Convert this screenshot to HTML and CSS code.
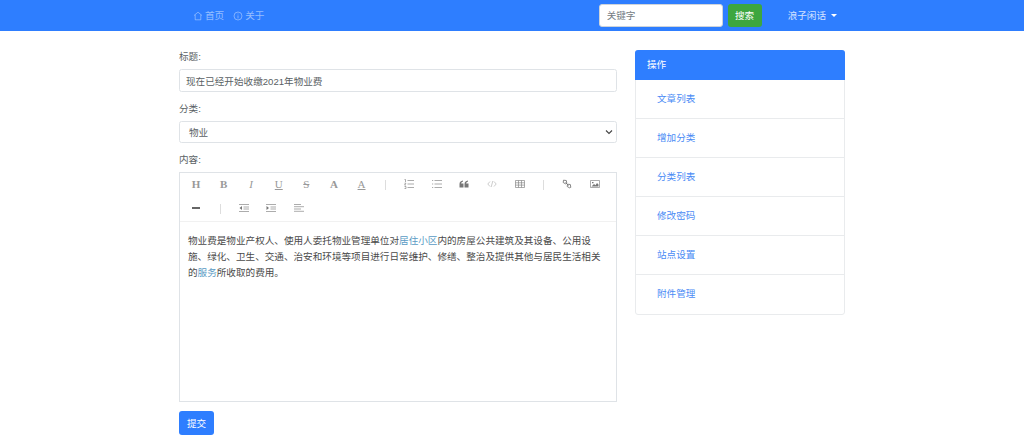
FILE: index.html
```html
<!DOCTYPE html>
<html lang="zh">
<head>
<meta charset="utf-8">
<title>编辑</title>
<link rel="stylesheet" href="styles.css">
</head>
<body>
<header class="navbar">
  <nav class="nav-left">
    <a class="nav-link" href="#"><svg class="nav-icon" viewBox="0 0 10 10"><path d="M1 4.500 5 1.200l4 3.300M2.200 3.800v5h5.600v-5"/></svg>首页</a>
    <a class="nav-link" href="#"><svg class="nav-icon" viewBox="0 0 10 10"><circle cx="5" cy="5" r="4"/><path d="M5 4.400v3M5 2.600v.8"/></svg>关于</a>
  </nav>
  <form class="search">
    <input class="search-input" placeholder="关键字">
    <button class="search-btn" type="button">搜索</button>
  </form>
  <a class="user" href="#">浪子闲话<span class="caret"></span></a>
</header>

<main class="page">
  <form class="editor-form">
    <label class="label">标题:</label>
    <input class="control" value="现在已经开始收缴2021年物业费">
    <label class="label">分类:</label>
    <div class="select">物业
      <svg class="chev" viewBox="0 0 8 6"><path d="M1 1.500 4 4.500l3-3"/></svg>
    </div>
    <label class="label">内容:</label>
    <div class="editor">
      <div class="toolbar">
        <span class="tool serif bold">H</span>
        <span class="tool serif bold">B</span>
        <span class="tool serif italic">I</span>
        <span class="tool serif under">U</span>
        <span class="tool serif strike">S</span>
        <span class="tool serif bold">A</span>
        <span class="tool serif under">A</span>
        <span class="sep"></span>
        <span class="tool"><svg viewBox="0 0 10 10"><path d="M3.500 1.500H10M3.500 5H10M3.500 8.500H10M.5.500h1v2.500M.5 4.200h1.500L.5 6h1.500M.5 7.500h1.500V9.500H.5"/></svg></span>
        <span class="tool"><svg viewBox="0 0 10 10"><path d="M2.500 1.500H10M2.500 5H10M2.500 8.500H10M0 1.500h1.200M0 5h1.200M0 8.500h1.200"/></svg></span>
        <span class="tool"><svg viewBox="0 0 10 10"><path class="fill" d="M.5 8.500V5c0-2 1-3 3.500-3.500v1C2.800 3 2.200 3.600 2.200 4.500H4.500v4zM5.500 8.500V5c0-2 1-3 3.500-3.500v1C7.800 3 7.200 3.600 7.200 4.500h2.300v4z"/></svg></span>
        <span class="tool"><svg viewBox="0 0 10 10"><path class="thin" d="M3 2.500.8 5 3 7.500M7 2.500 9.200 5 7 7.500M5.800 2 4.200 8"/></svg></span>
        <span class="tool"><svg viewBox="0 0 10 10"><path d="M.5 1.500h9v7h-9zM.5 3.800h9M.5 6.100h9M3.500 1.500v7M6.500 1.500v7"/></svg></span>
        <span class="sep"></span>
        <span class="tool"><svg viewBox="0 0 10 10"><path class="link" d="M1.500 1.200 4.300 1.500 4.800 4.300 3.500 4.800 1.200 3.500zM5.500 5.200 8.300 5.500 8.800 8.300 7.500 8.800 5.200 7.500zM3.500 3.500l3 3"/></svg></span>
        <span class="tool"><svg viewBox="0 0 10 10"><path d="M.5 1.500h9v7h-9z"/><path class="fill" d="M1.500 7.500 4 5l1.500 1.200L7 4l1.500 1.500v2zM2 3h1.500v1.200H2z"/></svg></span>
        <span class="tool"><svg viewBox="0 0 10 10"><path class="heavy" d="M1 5h8"/></svg></span>
        <span class="sep"></span>
        <span class="tool"><svg viewBox="0 0 10 10"><path d="M0 1.500h10M4.500 4h5.500M4.500 6h5.500M0 8.500h10"/><path class="fill" d="M3 3v4L.5 5z"/></svg></span>
        <span class="tool"><svg viewBox="0 0 10 10"><path d="M0 1.500h10M4.500 4h5.500M4.500 6h5.500M0 8.500h10"/><path class="fill" d="M.5 3v4L3 5z"/></svg></span>
        <span class="tool"><svg viewBox="0 0 10 10"><path d="M0 1.500h7M0 3.700h10M0 6h7M0 8.300h10"/></svg></span>
      </div>
      <div class="content">物业费是物业产权人、使用人委托物业管理单位对<a href="#">居住小区</a>内的房屋公共建筑及其设备、公用设施、绿化、卫生、交通、治安和环境等项目进行日常维护、修缮、整治及提供其他与居民生活相关的<a href="#">服务</a>所收取的费用。</div>
    </div>
    <button class="submit" type="button">提交</button>
  </form>

  <aside class="card">
    <div class="card-head">操作</div>
    <a class="item" href="#">文章列表</a>
    <a class="item" href="#">增加分类</a>
    <a class="item" href="#">分类列表</a>
    <a class="item" href="#">修改密码</a>
    <a class="item" href="#">站点设置</a>
    <a class="item" href="#">附件管理</a>
  </aside>
</main>
</body>
</html>
```
FILE: styles.css
```css
* { box-sizing: border-box; }
html, body { margin: 0; height: 445px; overflow: hidden; }
body {
  background: #fff;
  color: #5a5f64;
  font: 9.600px/15px "Liberation Sans", "Noto Sans CJK SC", sans-serif;
}
a { text-decoration: none; }

.navbar {
  height: 31px;
  background: #2e7eff;
  display: flex;
  align-items: center;
  padding: 0 187px 0 193px;
}
.nav-left { display: flex; gap: 9px; flex: 1; }
.nav-link { color: rgba(255,255,255,.5); display: flex; align-items: center; gap: 2px; }
.nav-icon { width: 10px; height: 10px; fill: none; stroke: rgba(255,255,255,.55); stroke-width: .7; }
.search { display: flex; gap: 5px; align-items: center; }
.search-input {
  width: 124px; height: 23px;
  border: 1px solid #ced4da; border-radius: 3px;
  padding: 0 7px; font: inherit; color: #5a5f64;
}
.search-input::placeholder { color: #757c83; }
.search-btn {
  width: 34px; height: 23px;
  background: #3da63f; border: 0; border-radius: 3px;
  color: #fff; font: inherit; padding: 0;
}
.user { color: rgba(255,255,255,.8); margin-left: 26px; display: flex; align-items: center; white-space: nowrap; }
.caret {
  margin-left: 5px; flex: none;
  border-top: 3px solid #fff; border-left: 3px solid transparent; border-right: 3px solid transparent;
}

.page { display: flex; align-items: flex-start; gap: 18px; padding: 18px 179px 0; }
.editor-form { width: 438px; display: flex; flex-direction: column; align-items: flex-start; }
.label { margin: 0 0 4px; height: 16px; line-height: 16px; }
.control, .select {
  width: 100%; height: 23px;
  border: 1px solid #dfe3e7; border-radius: 2.500px;
  padding: 0 6px; font: inherit; color: #5a5f64;
  margin-bottom: 9px; background: #fff;
}
.select { height: 22px; display: flex; align-items: center; justify-content: space-between; padding: 0 3px 0 9px; }
.chev { width: 8px; height: 6px; fill: none; stroke: #444; stroke-width: 1.100; }
.editor { width: 100%; height: 230px; border: 1px solid #dfe3e7; }
.toolbar {
  height: 49px; padding-left: 2.200px;
  border-bottom: 1px solid #f1f1f1;
  display: flex; flex-wrap: wrap; align-content: flex-start;
}
.tool {
  width: 27.600px; height: 24px; padding-bottom: 2px;
  display: flex; align-items: center; justify-content: center;
  color: #999;
}
.tool svg { width: 10px; height: 10px; fill: none; stroke: #888; stroke-width: .7; }
.tool .fill { fill: #777; stroke: none; }
.tool .thin { stroke: #aaa; stroke-width: .6; }
.tool .heavy { stroke: #666; stroke-width: 2; }
.tool .link { stroke: #777; stroke-width: .9; }
.serif { font-family: "Liberation Serif", serif; font-size: 11px; }
.bold { font-weight: bold; }
.italic { font-style: italic; }
.under { text-decoration: underline; }
.strike { text-decoration: line-through; }
.sep { width: 1px; height: 10px; background: #ddd; margin: 7px 9px 0 10px; }
.content { padding: 11px 8px; line-height: 16px; color: #4a4a4a; }
.content a { color: #5a9bc4; }
.submit {
  margin-top: 9px; width: 35px; height: 24px;
  background: #2e7eff; border: 0; border-radius: 3px;
  color: #fff; font: inherit; padding: 0;
}

.card { width: 210px; border: 1px solid #e9ebed; border-radius: 3px; margin-top: 1px; }
.card-head {
  height: 30px; margin: -1px -1px 0;
  background: #2e7eff; color: #fff;
  border-radius: 3px 3px 0 0;
  padding: 0 12px; line-height: 30px;
}
.item {
  display: block; height: 39px; line-height: 38px;
  padding: 0 21px; color: #4a8bf5;
  border-bottom: 1px solid #e9ebed;
}
.item:last-child { border-bottom: 0; }
```
